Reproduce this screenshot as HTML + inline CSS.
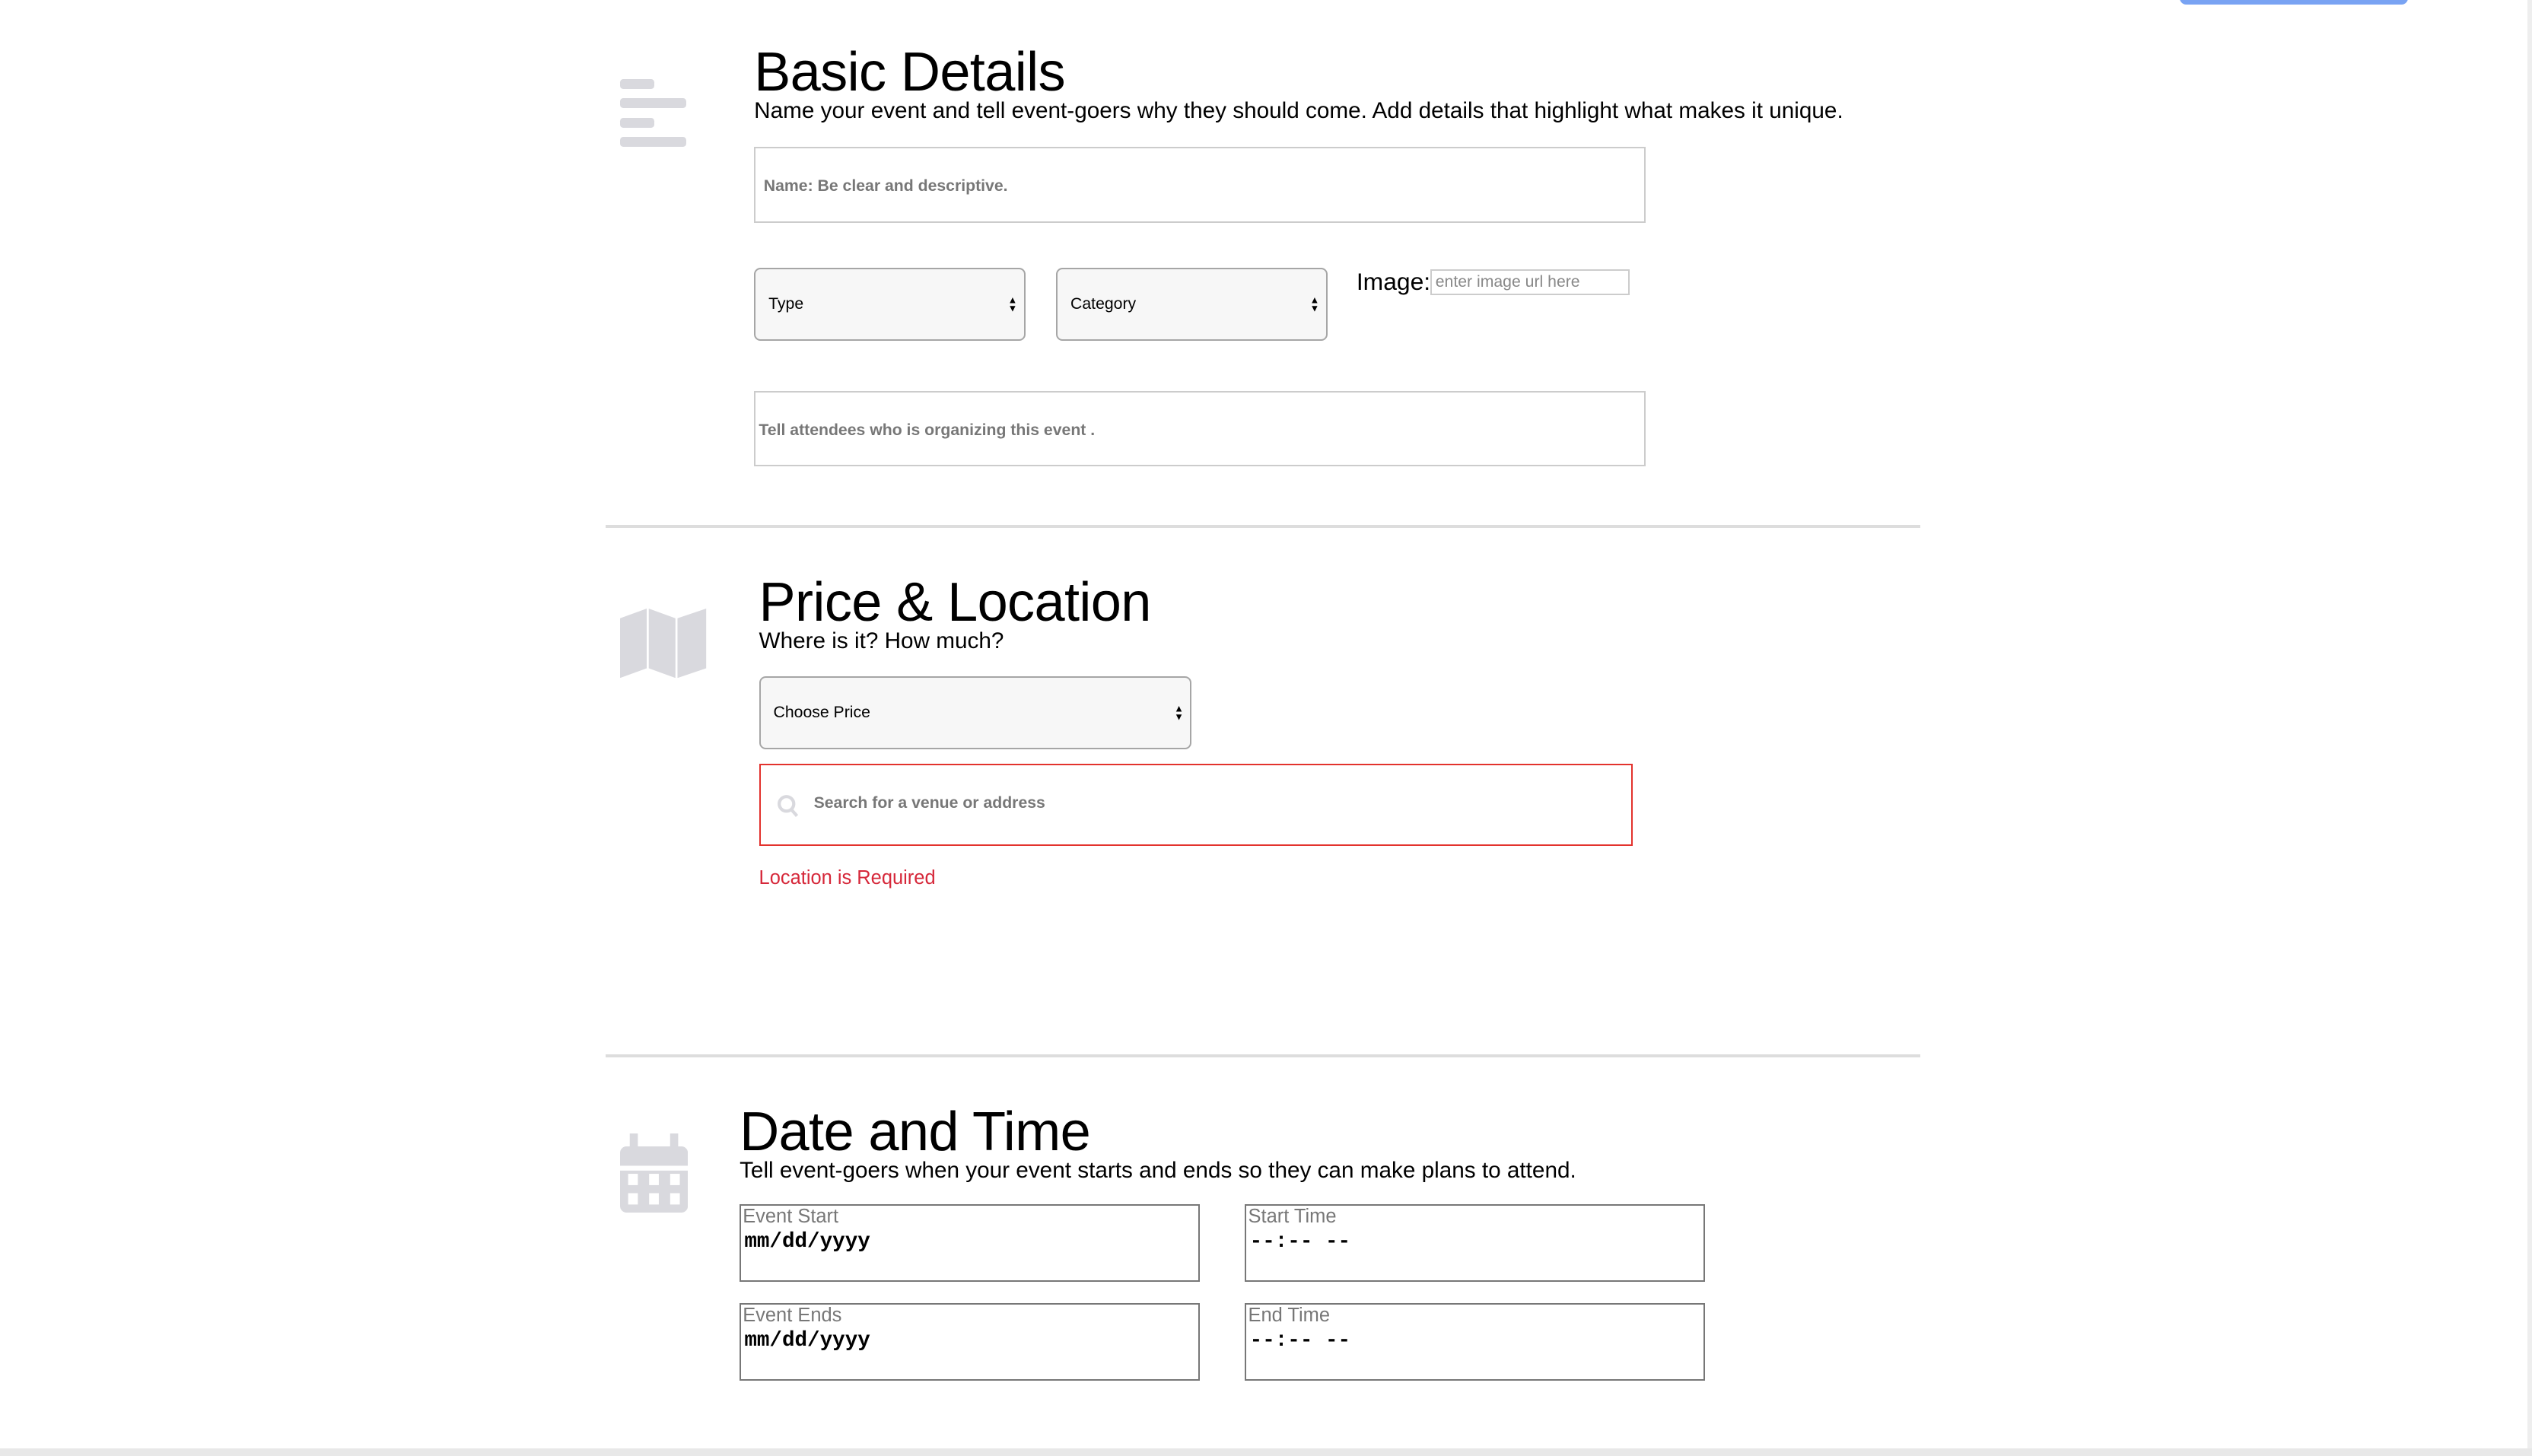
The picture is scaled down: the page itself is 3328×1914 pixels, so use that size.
<!DOCTYPE html>
<html><head><meta charset="utf-8"><style>
html,body{margin:0;padding:0;background:#fff;overflow:hidden}
body{width:1568px;height:902px;zoom:2.12245;position:relative;font-family:"Liberation Sans",sans-serif;color:#000}
.a{position:absolute}
.h{font-size:34px;line-height:34px;letter-spacing:-0.3px}
.s{font-size:14px;line-height:16px}
.box{position:absolute;box-sizing:border-box;border:1px solid #ccc;background:#fff}
.sel{position:absolute;box-sizing:border-box;border:1px solid #a6a6a6;border-radius:4px;background:#f7f7f7;font-size:10px}
.sel span{position:absolute;left:8px;top:50%;transform:translateY(-50%)}
.sel i{position:absolute;right:4px;top:50%;transform:translateY(-50%);font-style:normal;font-size:6px;line-height:5px;text-align:center}
.ph{color:#777;font-size:10px;font-weight:bold}
.hr{position:absolute;left:375px;width:814px;height:2px;background:#ddd}
.dt{position:absolute;box-sizing:border-box;border:1px solid #777;width:285px;height:48px}
.dt .l{position:absolute;left:1px;top:0;font-size:12px;color:#777;line-height:14px}
.dt .v{position:absolute;left:2px;top:15px;font-family:"Liberation Mono",monospace;font-weight:bold;font-size:13px}
</style></head><body>
<div class="a" style="left:1350px;top:-2px;width:141px;height:5px;background:#79a3f3;border-radius:0 0 4px 4px"></div>
<div class="a" style="left:1565px;top:0;width:3px;height:902px;background:#eee"></div>
<div class="a" style="left:0;top:897px;width:1568px;height:5px;background:#e8e8e8"></div>

<!-- icon 1 -->
<div class="a" style="left:384px;top:49px;width:21px;height:6px;background:#d9d9de;border-radius:2px"></div>
<div class="a" style="left:384px;top:61px;width:41px;height:6px;background:#d9d9de;border-radius:2px"></div>
<div class="a" style="left:384px;top:73px;width:21px;height:6px;background:#d9d9de;border-radius:2px"></div>
<div class="a" style="left:384px;top:85px;width:41px;height:6px;background:#d9d9de;border-radius:2px"></div>

<div class="a h" style="left:467px;top:28px">Basic Details</div>
<div class="a s" style="left:467px;top:61px">Name your event and tell event-goers why they should come. Add details that highlight what makes it unique.</div>
<div class="box" style="left:467px;top:91px;width:552px;height:47px"><span class="a ph" style="left:5px;top:18px">Name: Be clear and descriptive.</span></div>
<div class="sel" style="left:467px;top:166px;width:168px;height:45px"><span>Type</span><i>▲<br>▼</i></div>
<div class="sel" style="left:654px;top:166px;width:168px;height:45px"><span>Category</span><i>▲<br>▼</i></div>
<div class="a" style="left:840px;top:166px;font-size:15px">Image:</div>
<div class="box" style="left:886px;top:167px;width:123px;height:16px;border-color:#ccc"><span class="a" style="left:2px;top:1px;font-size:10px;color:#888">enter image url here</span></div>
<div class="box" style="left:467px;top:242px;width:552px;height:47px"><span class="a ph" style="left:2px;top:18px">Tell attendees who is organizing this event .</span></div>

<div class="hr" style="top:325px"></div>

<!-- map icon -->
<svg class="a" style="left:384px;top:377px" width="54" height="43" viewBox="0 0 54 43"><path d="M0 6 L13 0 L13 37 L0 43Z M14 0 L27 6 L27 43 L14 37Z M28 6 L42 0 L42 37 L28 43Z" fill="#d9d9de" transform="translate(0,0) scale(1.27,1)"/></svg>

<div class="a h" style="left:470px;top:356px">Price &amp; Location</div>
<div class="a s" style="left:470px;top:389px">Where is it? How much?</div>
<div class="sel" style="left:470px;top:419px;width:268px;height:45px"><span>Choose Price</span><i>▲<br>▼</i></div>
<div class="box" style="left:470px;top:473px;width:541px;height:51px;border-color:#e3322d">
<svg class="a" style="left:10px;top:18px" width="14" height="15" viewBox="0 0 14 15"><circle cx="6" cy="6" r="4.5" fill="none" stroke="#d9d9de" stroke-width="2"/><path d="M9 9.5 L12.5 13.5" stroke="#d9d9de" stroke-width="2"/></svg>
<span class="a ph" style="left:33px;top:18px">Search for a venue or address</span></div>
<div class="a" style="left:470px;top:537px;font-size:12px;color:#d6283a">Location is Required</div>

<div class="hr" style="top:653px"></div>

<!-- calendar icon -->
<svg class="a" style="left:384px;top:702px" width="42" height="49" viewBox="0 0 42 49"><rect x="0" y="8" width="42" height="41" rx="4" fill="#d9d9de"/><rect x="6" y="0" width="5" height="10" fill="#d9d9de"/><rect x="31" y="0" width="5" height="10" fill="#d9d9de"/><rect x="0" y="36" width="0" height="0"/><rect x="0" y="20" width="42" height="3" fill="#fff"/><g fill="#fff"><rect x="5" y="25" width="6" height="7"/><rect x="18" y="25" width="6" height="7"/><rect x="31" y="25" width="6" height="7"/><rect x="5" y="37" width="6" height="7"/><rect x="18" y="37" width="6" height="7"/><rect x="31" y="37" width="6" height="7"/></g></svg>

<div class="a h" style="left:458px;top:684px">Date and Time</div>
<div class="a s" style="left:458px;top:717px">Tell event-goers when your event starts and ends so they can make plans to attend.</div>
<div class="dt" style="left:458px;top:746px"><span class="l">Event Start</span><span class="v">mm/dd/yyyy</span></div>
<div class="dt" style="left:771px;top:746px"><span class="l">Start Time</span><span class="v">--:-- --</span></div>
<div class="dt" style="left:458px;top:807px"><span class="l">Event Ends</span><span class="v">mm/dd/yyyy</span></div>
<div class="dt" style="left:771px;top:807px"><span class="l">End Time</span><span class="v">--:-- --</span></div>
</body></html>
